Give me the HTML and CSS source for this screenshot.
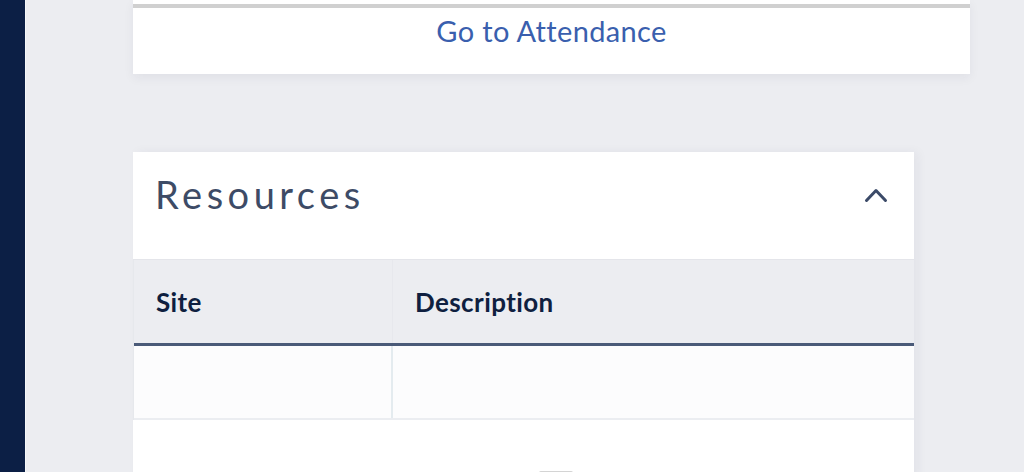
FILE: index.html
```html
<!DOCTYPE html>
<html>
<head>
<meta charset="utf-8">
<link rel="stylesheet" href="styles.css">
</head>
<body>
<div class="app">
  <aside class="sidebar"></aside>
  <main class="main">
    <section class="card attendance">
      <div class="bar-track"><div class="bar-fill"></div></div>
      <a class="goto" href="#">Go to Attendance</a>
    </section>
    <section class="card resources">
      <header class="res-head">
        <h2 class="res-title">Resources</h2>
        <svg class="chev" width="24" height="16" viewBox="0 0 24 16"><path d="M2.5 13.5 L12 3.5 L21.5 13.5" fill="none" stroke="#3b4a68" stroke-width="3" stroke-linecap="round" stroke-linejoin="round"/></svg>
      </header>
      <div class="table">
        <div class="thead">
          <div class="th site">Site</div>
          <div class="th desc">Description</div>
        </div>
        <div class="trow">
          <div class="td site"></div>
          <div class="td desc"></div>
        </div>
      </div>
      <div class="res-foot"><div class="handle"></div></div>
    </section>
  </main>
</div>
</body>
</html>
```
FILE: styles.css
```css
html, body {
  margin: 0;
  padding: 0;
  height: 100%;
  overflow: hidden;
  background: #ecedf1;
  font-family: "Lato", "Noto Sans", sans-serif;
}
.app {
  display: flex;
  height: 472px;
}
.sidebar {
  width: 25px;
  flex: none;
  background: #0c1f45;
  border-right: 1px solid #f6f7f9;
}
.main {
  flex: 1;
  padding-left: 107px;
  display: flex;
  flex-direction: column;
  align-items: flex-start;
}
.card {
  flex: none;
  background: #fff;
}
.attendance {
  width: 837px;
  height: 74px;
  box-shadow: 0 4px 10px rgba(30, 40, 70, 0.06);
  display: flex;
  flex-direction: column;
  align-items: center;
}
.bar-track {
  align-self: stretch;
  margin-top: 4px;
  height: 4px;
  background: #d0d0d0;
}
.goto {
  margin-top: 5px;
  font-size: 29px;
  line-height: 36px;
  letter-spacing: 0.35px;
  color: #3a5fae;
  text-decoration: none;
}
.resources {
  margin-top: 78px;
  width: 781px;
  box-shadow: 4px 0 10px rgba(30, 40, 70, 0.05);
}
.res-head {
  height: 107px;
  display: flex;
  align-items: center;
  justify-content: space-between;
  padding: 0 26px 0 22px;
  border-bottom: 1px solid #e4e5ea;
}
.res-title {
  margin: 0;
  font-weight: 400;
  font-size: 38px;
  letter-spacing: 4.5px;
  color: #3d4b66;
  position: relative;
  top: -12px;
}
.chev {
  position: relative;
  top: -11px;
}
.table {
  border-left: 1px solid #e6e8ec;
}
.thead {
  display: grid;
  grid-template-columns: 259px 1fr;
  height: 83px;
  background: #ecedf1;
  border-bottom: 3px solid #4a5a78;
}
.th {
  display: flex;
  align-items: center;
  padding-left: 22px;
  font-weight: 700;
  font-size: 26px;
  letter-spacing: 0.4px;
  color: #0f1f40;
}
.th.site {
  border-right: 1px solid #e7e8ed;
}
.trow {
  display: grid;
  grid-template-columns: 259px 1fr;
  height: 72px;
  background: #fcfcfd;
  border-bottom: 2px solid #ebedf1;
}
.td.site {
  border-right: 2px solid #e4ebef;
}
.res-foot {
  height: 60px;
  display: flex;
  justify-content: center;
  align-items: flex-start;
  padding-top: 51px;
  padding-left: 64px;
  box-sizing: border-box;
}
.handle {
  width: 34px;
  height: 3px;
  background: #d4d4d4;
  border-radius: 2px 2px 0 0;
}
```
